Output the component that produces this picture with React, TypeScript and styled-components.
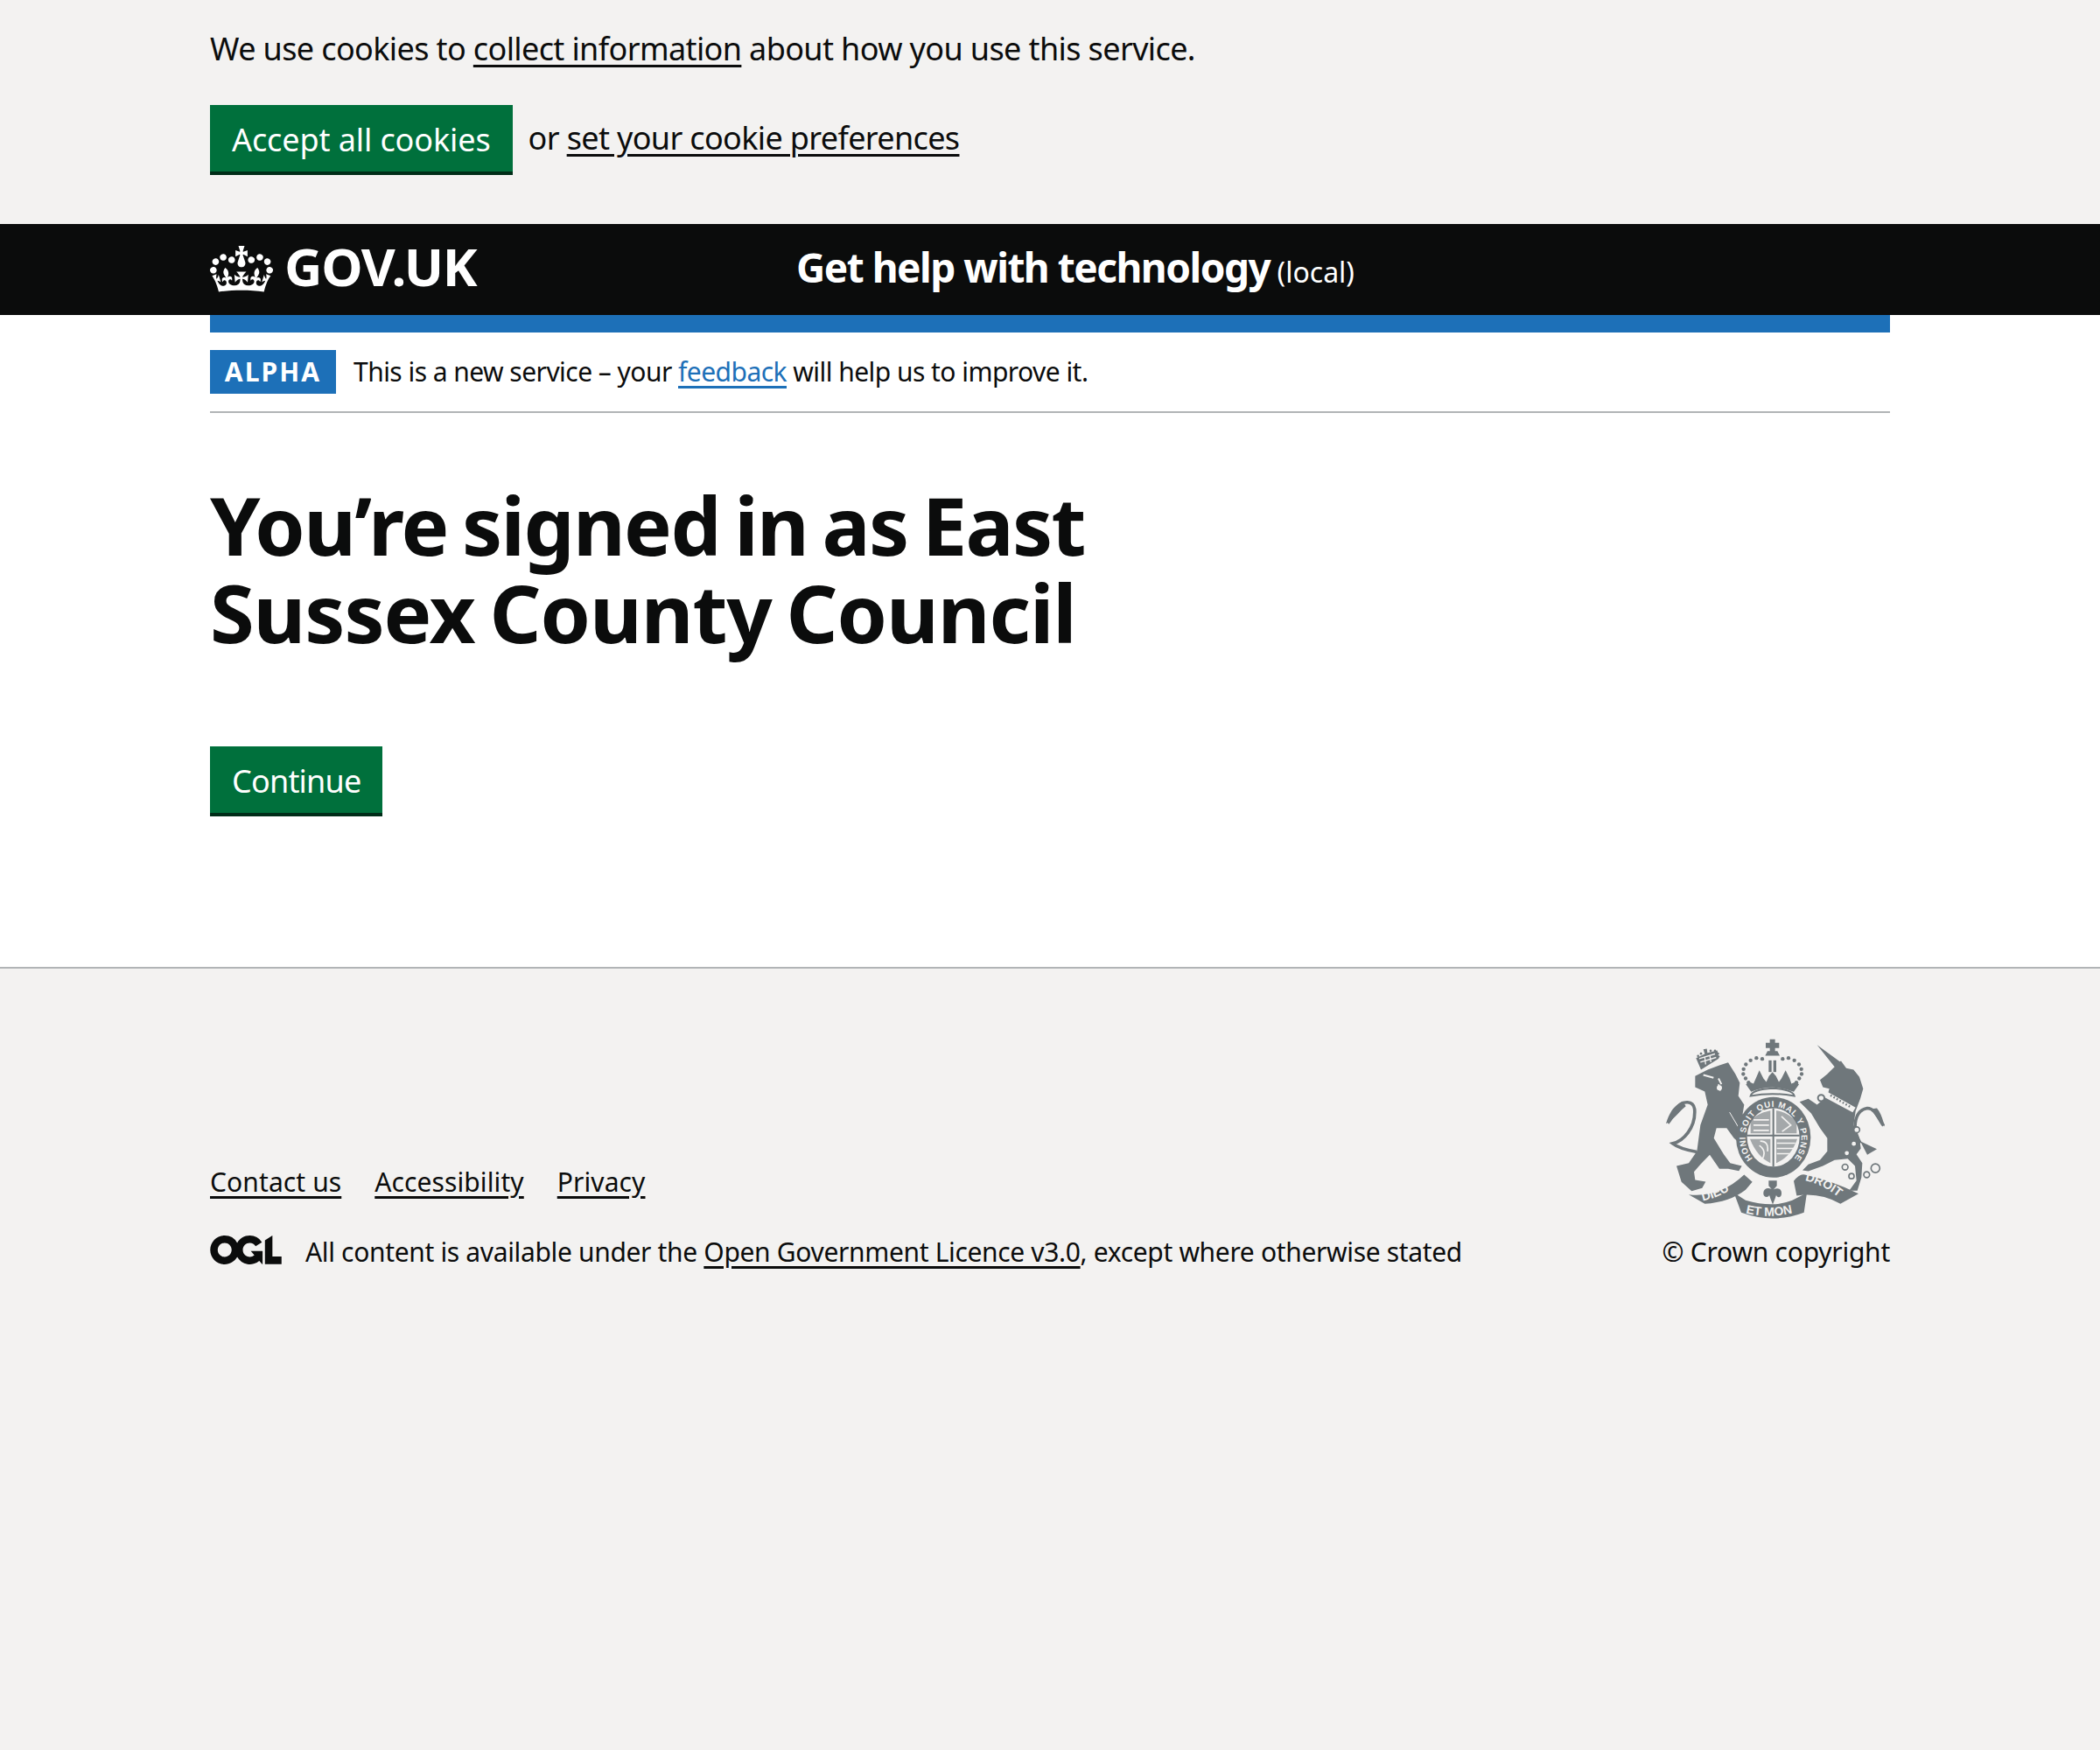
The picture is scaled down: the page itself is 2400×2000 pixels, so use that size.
import React from "react";
import styled, { createGlobalStyle } from "styled-components";

const Global = createGlobalStyle`
  html, body { margin: 0; padding: 0; background: #fff; }
  body { font-family: "Noto Sans", "Liberation Sans", sans-serif; color: #0b0c0c; }
  #root { min-height: 2000px; display: flex; flex-direction: column; }
`;

const Page = styled.div`
  min-height: 2000px;
  display: flex;
  flex-direction: column;
  flex: 1;
`;
const Container = styled.div`
  width: 1920px;
  margin: 0 auto;
`;
const CookieBanner = styled.div`
  background: #f3f2f1;
  height: 256px;
  box-sizing: border-box;
  padding-top: 31px;
`;
const CookieText = styled.p`
  margin: 0 0 39px;
  font-size: 36px;
  line-height: 50px;
  letter-spacing: -0.62px;
`;
const CookieActions = styled.div`
  display: flex;
  align-items: flex-start;
  font-size: 36px;
  line-height: 50px;
  letter-spacing: -0.65px;
`;
const GreenButton = styled.a<{ $tracking: number }>`
  display: inline-block;
  box-sizing: border-box;
  height: 80px;
  padding: 15px 25px 0;
  background: #00703c;
  color: #fff;
  font-size: 36px;
  line-height: 50px;
  letter-spacing: ${(p) => p.$tracking}px;
  box-shadow: inset 0 -4px 0 #002d18;
`;
const OrText = styled.span`
  margin-left: 18px;
  padding-top: 13px;
`;
const Link = styled.a`
  color: inherit;
  text-decoration: underline;
  text-decoration-thickness: 3px;
  text-underline-offset: 5px;
`;
const Header = styled.header`
  background: #0b0c0c;
  height: 104px;
  color: #fff;
`;
const HeaderInner = styled(Container)`
  display: flex;
  height: 100%;
  align-items: center;
`;
const Logo = styled.div`
  width: 33.333%;
  display: flex;
  align-items: center;
  gap: 13px;
  font-weight: 700;
  font-size: 60px;
  letter-spacing: -1.3px;
`;
const LogoText = styled.span`
  margin-top: -8px;
`;
const Crown = styled.svg`
  width: 72px;
  height: 53px;
  flex: none;
  margin-top: -2px;
`;
const ServiceTitle = styled.div`
  padding-left: 30px;
  margin-top: -6px;
  font-weight: 700;
  font-size: 46px;
  letter-spacing: -1.5px;
`;
const LocalTag = styled.span`
  font-weight: 400;
  font-size: 32px;
  letter-spacing: 0;
`;
const BlueBar = styled.div`
  height: 20px;
  background: #1d70b8;
`;
const Phase = styled.div`
  display: flex;
  align-items: center;
  padding: 20px 0;
  border-bottom: 2px solid #b1b4b6;
  font-size: 30px;
  line-height: 50px;
  letter-spacing: -0.54px;
`;
const Tag = styled.strong`
  width: 144px;
  height: 50px;
  box-sizing: border-box;
  background: #1d70b8;
  color: #fff;
  font-size: 30px;
  line-height: 50px;
  letter-spacing: 2.1px;
  text-align: center;
  margin-right: 20px;
`;
const BlueLink = styled(Link)`
  color: #1d70b8;
`;
const Main = styled.main`
  padding: 78px 0 172px;
`;
const Title = styled.h1`
  margin: 0 0 103px;
  font-size: 92px;
  line-height: 100px;
  font-weight: 700;
  word-spacing: -6px;
`;
const TitleLine = styled.span<{ $tracking: number }>`
  display: block;
  letter-spacing: ${(p) => p.$tracking}px;
`;
const Footer = styled.footer`
  flex: 1;
  background: #f3f2f1;
  border-top: 2px solid #b1b4b6;
  padding-top: 77px;
`;
const FooterRow = styled(Container)`
  display: flex;
  justify-content: space-between;
  align-items: flex-end;
`;
const FooterLeft = styled.div`
  font-size: 30px;
  line-height: 40px;
  letter-spacing: -0.34px;
`;
const Links = styled.div`
  display: flex;
  gap: 38px;
  margin-bottom: 40px;
  letter-spacing: 0.1px;
`;
const Licence = styled.div`
  display: flex;
  align-items: center;
  gap: 27px;
`;
const Ogl = styled.svg`
  width: 82px;
  height: 33px;
  flex: none;
  margin-top: -6px;
`;
const FooterRight = styled.div`
  display: flex;
  flex-direction: column;
  align-items: flex-end;
  font-size: 30px;
  line-height: 40px;
  letter-spacing: -0.25px;
`;
const CrestSvg = styled.svg`
  width: 260px;
  height: 212px;
  margin-bottom: 15px;
`;
const CrestText = styled.text`
  fill: #f3f2f1;
  font-family: "Liberation Sans", sans-serif;
  font-weight: 700;
`;

const crownPath = "M25 30.2c3.5 1.5 7.7-.2 9.1-3.7 1.5-3.6-.2-7.8-3.9-9.2-3.6-1.4-7.6.3-9.1 3.9-1.4 3.5.3 7.5 3.9 9zM9 39.5c3.6 1.5 7.8-.2 9.2-3.7 1.5-3.6-.2-7.8-3.9-9.1-3.6-1.5-7.6.2-9.1 3.8-1.4 3.5.3 7.5 3.8 9zM4.4 57.2c3.5 1.5 7.7-.2 9.1-3.8 1.5-3.6-.2-7.7-3.9-9.1-3.5-1.5-7.6.3-9.1 3.8-1.4 3.5.3 7.6 3.9 9.1zm38.3-21.4c3.5 1.5 7.7-.2 9.1-3.8 1.5-3.6-.2-7.7-3.9-9.1-3.6-1.5-7.6.3-9.1 3.8-1.3 3.6.4 7.7 3.9 9.1zm64.4-5.6c-3.6 1.5-7.8-.2-9.1-3.7-1.5-3.6.2-7.8 3.8-9.2 3.6-1.4 7.7.3 9.2 3.9 1.3 3.5-.4 7.5-3.9 9zm15.9 9.3c-3.6 1.5-7.7-.2-9.1-3.7-1.5-3.6.2-7.8 3.7-9.1 3.6-1.5 7.7.2 9.2 3.8 1.5 3.5-.3 7.5-3.8 9zm4.7 17.7c-3.6 1.5-7.8-.2-9.2-3.8-1.5-3.6.2-7.7 3.9-9.1 3.6-1.5 7.7.3 9.2 3.8 1.3 3.5-.4 7.6-3.9 9.1zM89.3 35.8c-3.6 1.5-7.8-.2-9.2-3.8-1.4-3.6.2-7.7 3.9-9.1 3.6-1.5 7.7.3 9.2 3.8 1.4 3.6-.3 7.7-3.9 9.1zM69.7 17.7l8.9 4.7V9.3l-8.9 2.8c-.2-.3-.5-.6-.9-.9L72.4 0H59.6l3.5 11.2c-.3.3-.6.5-.9.9l-8.8-2.8v13.1l8.8-4.7c.3.3.6.7.9.9l-5 15.4v.1c-.2.8-.4 1.6-.4 2.4 0 4.1 3.1 7.5 7 8.1h.2c.3 0 .7.1 1 .1.4 0 .7 0 1-.1h.2c4-.6 7.1-4.1 7.1-8.1 0-.8-.1-1.7-.4-2.4V34l-5.1-15.4c.4-.2.7-.6 1-.9zM66 92.8c16.9 0 32.8 1.1 47.1 3.2 4-16.9 8.9-26.7 14-33.5l-9.6-3.4c1 4.9 1.1 7.2 0 10.2-1.5-1.4-3-4.3-4.2-8.7L108.6 76c2.8-2 5-3.2 7.5-3.3-4.4 9.4-10 11.9-13.6 11.2-4.3-.8-6.3-4.6-5.6-7.9 1-4.7 5.7-5.9 8-.5 4.3-8.7-3-11.4-7.6-8.8 7.1-7.2 7.9-13.5 2.1-21.1-8 6.1-8.1 12.3-4.5 20.8-4.7-5.4-12.1-2.5-9.5 6.2 3.4-5.2 7.9-2 7.2 3.1-.6 4.3-6.4 7.8-13.5 7.2-10.3-.9-10.9-8-11.2-13.8 2.5-.5 7.1 1.8 11 7.3L80.2 60c-4.1 4.4-8 5.3-12.3 5.4 1.4-4.4 8-11.6 8-11.6H55.5s6.4 7.2 7.9 11.6c-4.2-.1-8-1-12.3-5.4l1.4 16.4c3.9-5.5 8.5-7.7 10.9-7.3-.3 5.8-.9 12.8-11.1 13.8-7.2.6-12.9-2.9-13.5-7.2-.7-5 3.8-8.3 7.1-3.1 2.7-8.7-4.6-11.6-9.4-6.2 3.7-8.5 3.6-14.7-4.6-20.8-5.8 7.6-5 13.9 2.2 21.1-4.7-2.6-11.9.1-7.7 8.8 2.3-5.5 7.1-4.2 8.1.5.7 3.3-1.3 7.1-5.7 7.9-3.5.7-9-1.8-13.5-11.2 2.5.1 4.7 1.3 7.5 3.3l-4.7-15.4c-1.2 4.4-2.7 7.2-4.3 8.7-1.1-3-.9-5.3 0-10.2l-9.5 3.4c5 6.9 9.9 16.7 14 33.5 14.8-2.1 30.8-3.2 47.7-3.2z";
const oglPath = "M421.5 142.8V.1l-50.7 32.3v161.1h112.4v-50.7zm-122.3-9.6A47.12 47.12 0 0 1 221 97.8c0-26 21.1-47.1 47.1-47.1 16.7 0 31.4 8.7 39.7 21.8l42.7-27.2A97.63 97.63 0 0 0 268.1 0c-36.5 0-68.3 20.1-85.1 49.7A98 98 0 0 0 97.8 0C43.9 0 0 43.9 0 97.8s43.9 97.8 97.8 97.8c36.5 0 68.3-20.1 85.1-49.7a97.76 97.76 0 0 0 149.6 25.4l19.4 22.2h3v-87.8h-80l24.3 27.5zM97.8 145c-26 0-47.1-21.1-47.1-47.1s21.1-47.1 47.1-47.1 47.2 21 47.2 47S123.8 145 97.8 145";

const D = "#6f777b";
const L = "#f3f2f1";
const archDots: [number, number][] = [[402,113],[382,110],[362,118],[346,132],[338,148],[337,165],[345,180],[355,194],[472,113],[492,110],[512,118],[528,132],[536,148],[537,165],[529,180],[519,194]];
const lionCrownDots: [number, number][] = [[182,103],[192,95],[225,85],[240,85],[250,95],[252,105]];

function Crest() {
  return (
    <CrestSvg viewBox="60 35 780 635" aria-hidden="true">
      <path d="M178 432 C140 425 110 415 95 403 C130 395 175 350 170 285 C165 255 130 255 110 280 C100 300 90 320 78 333" fill="none" stroke={D} strokeWidth="11" />
      <path d="M72 335 C85 290 105 270 130 258 L140 275 C115 295 100 320 72 335Z" fill={D} />
      <path d="M172 172 L215 150 L255 135 L285 125 L310 165 L325 195 L320 240 L340 270 L335 300 L345 368 L345 420 L305 385 L280 350 L245 350 L236 385 L270 440 L292 470 L332 480 L322 497 L285 490 L255 490 L222 442 L190 475 L168 500 L172 528 L208 534 L196 556 L160 566 L125 535 L108 480 L150 470 L178 430 L190 340 L215 270 L205 225 L172 210Z" fill={D} />
      <path d="M290 296 L335 372" stroke={L} strokeWidth="3" fill="none" />
      <path d="M200 168 L235 178 M252 180 L262 200 M252 200 L258 222" stroke={L} strokeWidth="6" fill="none" />
      <circle cx="255" cy="212" r="9" fill={L} />
      <path d="M175 110 L205 96 L200 80 L212 78 L214 92 L248 84 L253 112 L192 150Z" fill={D} />
      <path d="M186 112 L240 96 M190 124 L244 108 M205 108 L208 132 M222 100 L226 124" stroke={L} strokeWidth="4" fill="none" />
      {lionCrownDots.map(([x, y]) => <circle key={x} cx={x} cy={y} r="4" fill={D} />)}
      <path d="M428 46 h18 v12 h14 v18 h-14 v10 h8 l8 16 h-50 l8 -16 h8 v-10 h-14 v-18 h14z" fill={D} />
      <rect x="424" y="118" width="10" height="40" fill={D} />
      <rect x="440" y="118" width="10" height="40" fill={D} />
      {archDots.map(([x, y]) => <circle key={`${x}-${y}`} cx={x} cy={y} r="6.5" fill={D} />)}
      <path d="M358 192 L372 198 L380 180 L392 152 L406 180 L416 192 L425 172 L437 158 L449 172 L459 192 L468 180 L482 152 L496 180 L502 198 L516 192 L528 200 L510 226 Q437 196 364 226 L346 200Z" fill={D} />
      <path d="M738 402 C705 345 722 288 762 282 C790 282 800 318 818 342" fill="none" stroke={D} strokeWidth="11" />
      <path d="M738 395 L795 422 L762 442Z" fill={D} />
      <path d="M822 345 C800 325 785 300 775 285 L795 282 C810 300 815 320 822 345Z" fill={D} />
      <path d="M600 185 L625 165 L650 140 L590 65 L668 122 L672 120 L690 145 L715 150 L735 175 L748 215 L738 250 L722 292 L715 340 L735 385 L740 420 L725 440 L745 470 L742 520 L728 565 L700 565 L725 530 L720 480 L695 455 L650 460 L610 480 L560 498 L540 495 L560 475 L600 460 L625 430 L625 385 L600 350 L570 300 L530 260 L560 250 L590 270 L625 240 L632 215 L610 210Z" fill={D} />
      <path d="M625 226 L722 280 L712 296 L618 246Z" fill={L} />
      <path d="M636 238 L708 280" stroke={D} strokeWidth="7" strokeDasharray="5 7" />
      <circle cx="604" cy="247" r="11" fill={L} stroke={D} strokeWidth="6" />
      <circle cx="726" cy="356" r="10" fill={L} stroke={D} strokeWidth="5" />
      <circle cx="716" cy="404" r="7" fill={L} />
      <circle cx="692" cy="436" r="7" fill={L} />
      <circle cx="686" cy="484" r="10" fill={L} stroke={D} strokeWidth="5" />
      <circle cx="708" cy="515" r="9" fill={L} stroke={D} strokeWidth="5" />
      <circle cx="760" cy="510" r="10" fill={L} stroke={D} strokeWidth="5" />
      <circle cx="790" cy="488" r="15" fill={L} stroke={D} strokeWidth="5" />
      <ellipse cx="440" cy="382" rx="128" ry="138" fill={D} />
      <path d="M362 240 Q368 218 437 214 Q506 218 512 240 Q437 226 362 240Z" fill={L} stroke={D} strokeWidth="6" />
      <ellipse cx="440" cy="382" rx="90" ry="100" fill={L} />
      <path d="M350 376 H530 M440 282 V482" stroke={D} strokeWidth="6" />
      <path d="M362 322 Q395 296 430 290 V368 H362Z M450 290 Q490 296 520 328 V368 H450Z M360 388 H430 V470 Q385 450 360 388Z M450 388 H522 Q500 450 450 470Z" fill={D} opacity="0.6" />
      <path d="M372 322 H425 M372 340 H425 M372 358 H425 M452 402 H515 M452 420 H510 M452 438 H495 M392 410 Q420 430 400 460" stroke={L} strokeWidth="5" fill="none" />
      <path d="M468 310 L500 340 L470 362 M395 395 Q425 395 420 430" stroke={L} strokeWidth="5" fill="none" />
      <path id="garterArc" d="M369 455 A96 106 0 1 1 511 455" fill="none" />
      <CrestText fontSize="29"><textPath href="#garterArc" textLength="470" lengthAdjust="spacing">HONI SOIT QUI MAL Y PENSE</textPath></CrestText>
      <path d="M150 578 Q255 590 340 510 L368 535 L345 562 Q290 605 205 610Z" fill={D} />
      <path d="M305 572 L345 598 Q440 625 505 598 L555 572 L545 640 Q440 680 330 640Z" fill={D} />
      <path d="M510 532 Q530 505 548 510 Q640 530 732 575 L670 610 Q600 570 520 582Z" fill={D} />
      <path id="ribbonA" d="M198 600 Q275 584 332 530" fill="none" />
      <path id="ribbonB" d="M345 642 Q437 664 532 634" fill="none" />
      <path id="ribbonC" d="M548 530 Q615 545 672 594" fill="none" />
      <CrestText fontSize="42"><textPath href="#ribbonA">DIEU</textPath></CrestText>
      <CrestText fontSize="42"><textPath href="#ribbonB">ET MON</textPath></CrestText>
      <CrestText fontSize="42"><textPath href="#ribbonC">DROIT</textPath></CrestText>
      <path d="M424 530 H452 V548 L440 562 C445 555 470 552 468 575 C468 590 452 590 450 580 L446 592 L438 612 L430 592 L426 580 C424 590 404 590 406 572 C408 552 432 555 436 562 L424 548Z" fill={D} />
    </CrestSvg>
  );
}

export default function App() {
  return (
    <Page>
      <Global />
      <CookieBanner>
        <Container>
          <CookieText>We use cookies to <Link href="#">collect information</Link> about how you use this service.</CookieText>
          <CookieActions>
            <GreenButton $tracking={-0.1}>Accept all cookies</GreenButton>
            <OrText>or <Link href="#">set your cookie preferences</Link></OrText>
          </CookieActions>
        </Container>
      </CookieBanner>
      <Header>
        <HeaderInner>
          <Logo>
            <Crown viewBox="0 0 132 97"><path fill="currentColor" fillRule="evenodd" d={crownPath} /></Crown>
            <LogoText>GOV.UK</LogoText>
          </Logo>
          <ServiceTitle>Get help with technology<LocalTag> (local)</LocalTag></ServiceTitle>
        </HeaderInner>
      </Header>
      <Container>
        <BlueBar />
        <Phase>
          <Tag>ALPHA</Tag>
          <span>This is a new service – your <BlueLink href="#">feedback</BlueLink> will help us to improve it.</span>
        </Phase>
        <Main>
          <Title>
            <TitleLine $tracking={-1.65}>You’re signed in as East</TitleLine>
            <TitleLine $tracking={-1.07}>Sussex County Council</TitleLine>
          </Title>
          <GreenButton $tracking={-0.8}>Continue</GreenButton>
        </Main>
      </Container>
      <Footer>
        <FooterRow>
          <FooterLeft>
            <Links>
              <Link href="#">Contact us</Link>
              <Link href="#">Accessibility</Link>
              <Link href="#">Privacy</Link>
            </Links>
            <Licence>
              <Ogl viewBox="0 0 483.2 195.7"><path fill="currentColor" d={oglPath} /></Ogl>
              <span>All content is available under the <Link href="#">Open Government Licence v3.0</Link>, except where otherwise stated</span>
            </Licence>
          </FooterLeft>
          <FooterRight>
            <Crest />
            <span>© Crown copyright</span>
          </FooterRight>
        </FooterRow>
      </Footer>
    </Page>
  );
}
